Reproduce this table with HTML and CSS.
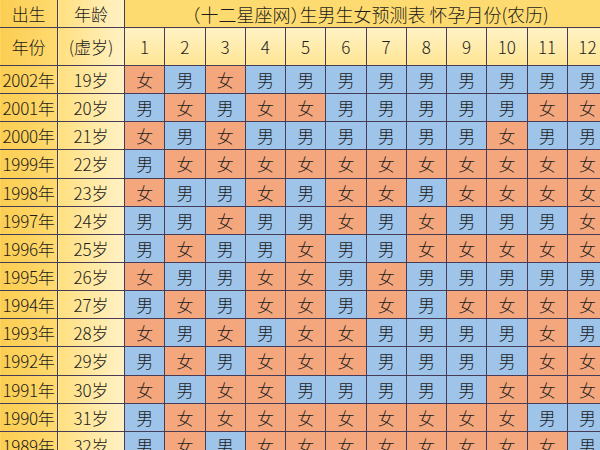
FILE: index.html
```html
<!DOCTYPE html>
<html lang="zh-CN">
<head>
<meta charset="utf-8">
<title>生男生女预测表</title>
<link rel="stylesheet" href="styles.css">
</head>
<body>
<div class="frame">
<table class="chart">
<colgroup>
<col class="c-yr"><col class="c-age">
<col class="c-m"><col class="c-m"><col class="c-m"><col class="c-m"><col class="c-m"><col class="c-m">
<col class="c-m"><col class="c-m"><col class="c-m"><col class="c-m"><col class="c-m"><col class="c-m">
</colgroup>
<thead>
<tr class="r-top">
<th class="yr">出生</th><th class="age">年龄</th>
<th class="title" colspan="12">（十二星座网）生男生女预测表&nbsp;怀孕月份(农历)</th>
</tr>
<tr class="r-sub">
<th class="yr">年份</th><th class="age">(虚岁)</th>
<th class="mon">1</th><th class="mon">2</th><th class="mon">3</th><th class="mon">4</th><th class="mon">5</th><th class="mon">6</th>
<th class="mon">7</th><th class="mon">8</th><th class="mon">9</th><th class="mon">10</th><th class="mon">11</th><th class="mon">12</th>
</tr>
</thead>
<tbody>
<tr><th class="yr">2002年</th><td class="age">19岁</td><td class="f">女</td><td class="m">男</td><td class="f">女</td><td class="m">男</td><td class="m">男</td><td class="m">男</td><td class="m">男</td><td class="m">男</td><td class="m">男</td><td class="m">男</td><td class="m">男</td><td class="m">男</td></tr>
<tr><th class="yr">2001年</th><td class="age">20岁</td><td class="m">男</td><td class="f">女</td><td class="m">男</td><td class="f">女</td><td class="f">女</td><td class="m">男</td><td class="m">男</td><td class="m">男</td><td class="m">男</td><td class="m">男</td><td class="f">女</td><td class="f">女</td></tr>
<tr><th class="yr">2000年</th><td class="age">21岁</td><td class="f">女</td><td class="m">男</td><td class="f">女</td><td class="m">男</td><td class="m">男</td><td class="m">男</td><td class="m">男</td><td class="m">男</td><td class="m">男</td><td class="f">女</td><td class="m">男</td><td class="m">男</td></tr>
<tr><th class="yr">1999年</th><td class="age">22岁</td><td class="m">男</td><td class="f">女</td><td class="f">女</td><td class="f">女</td><td class="f">女</td><td class="f">女</td><td class="f">女</td><td class="f">女</td><td class="f">女</td><td class="f">女</td><td class="f">女</td><td class="f">女</td></tr>
<tr><th class="yr">1998年</th><td class="age">23岁</td><td class="f">女</td><td class="m">男</td><td class="m">男</td><td class="f">女</td><td class="m">男</td><td class="f">女</td><td class="f">女</td><td class="m">男</td><td class="f">女</td><td class="f">女</td><td class="f">女</td><td class="f">女</td></tr>
<tr><th class="yr">1997年</th><td class="age">24岁</td><td class="m">男</td><td class="m">男</td><td class="f">女</td><td class="m">男</td><td class="m">男</td><td class="f">女</td><td class="m">男</td><td class="f">女</td><td class="m">男</td><td class="m">男</td><td class="m">男</td><td class="f">女</td></tr>
<tr><th class="yr">1996年</th><td class="age">25岁</td><td class="m">男</td><td class="f">女</td><td class="m">男</td><td class="m">男</td><td class="f">女</td><td class="m">男</td><td class="m">男</td><td class="f">女</td><td class="f">女</td><td class="f">女</td><td class="f">女</td><td class="f">女</td></tr>
<tr><th class="yr">1995年</th><td class="age">26岁</td><td class="f">女</td><td class="m">男</td><td class="m">男</td><td class="f">女</td><td class="f">女</td><td class="m">男</td><td class="f">女</td><td class="m">男</td><td class="m">男</td><td class="m">男</td><td class="m">男</td><td class="m">男</td></tr>
<tr><th class="yr">1994年</th><td class="age">27岁</td><td class="m">男</td><td class="f">女</td><td class="m">男</td><td class="f">女</td><td class="f">女</td><td class="m">男</td><td class="f">女</td><td class="m">男</td><td class="f">女</td><td class="f">女</td><td class="f">女</td><td class="f">女</td></tr>
<tr><th class="yr">1993年</th><td class="age">28岁</td><td class="f">女</td><td class="m">男</td><td class="f">女</td><td class="m">男</td><td class="f">女</td><td class="f">女</td><td class="m">男</td><td class="m">男</td><td class="m">男</td><td class="m">男</td><td class="f">女</td><td class="m">男</td></tr>
<tr><th class="yr">1992年</th><td class="age">29岁</td><td class="m">男</td><td class="f">女</td><td class="m">男</td><td class="f">女</td><td class="f">女</td><td class="f">女</td><td class="m">男</td><td class="m">男</td><td class="m">男</td><td class="m">男</td><td class="f">女</td><td class="f">女</td></tr>
<tr><th class="yr">1991年</th><td class="age">30岁</td><td class="f">女</td><td class="m">男</td><td class="f">女</td><td class="f">女</td><td class="m">男</td><td class="m">男</td><td class="m">男</td><td class="m">男</td><td class="m">男</td><td class="f">女</td><td class="f">女</td><td class="f">女</td></tr>
<tr><th class="yr">1990年</th><td class="age">31岁</td><td class="m">男</td><td class="f">女</td><td class="f">女</td><td class="f">女</td><td class="f">女</td><td class="f">女</td><td class="f">女</td><td class="f">女</td><td class="f">女</td><td class="f">女</td><td class="m">男</td><td class="m">男</td></tr>
<tr><th class="yr">1989年</th><td class="age">32岁</td><td class="m">男</td><td class="f">女</td><td class="m">男</td><td class="f">女</td><td class="f">女</td><td class="f">女</td><td class="f">女</td><td class="f">女</td><td class="f">女</td><td class="f">女</td><td class="f">女</td><td class="m">男</td></tr>
</tbody>
</table>
</div>
</body>
</html>
```
FILE: styles.css
```css
html, body {
  margin: 0;
  padding: 0;
  background: #ffffff;
}
.frame {
  width: 600px;
  height: 450px;
  overflow: hidden;
}
.chart {
  margin: -1px 0 0 -1px;
  border-collapse: collapse;
  table-layout: fixed;
  width: 608px;
  font-family: "Noto Sans CJK SC", "Noto Sans", sans-serif;
  font-size: 17px;
  color: #1c1c1c;
}
.c-yr { width: 58px; }
.c-age { width: 67px; }
.c-m { width: 40.25px; }
.chart th, .chart td {
  border: 1px solid #463c58;
  padding: 0;
  text-align: center;
  vertical-align: middle;
  font-weight: 300;
  white-space: nowrap;
  line-height: 1;
  overflow: hidden;
}
.r-top { height: 28px; }
.r-sub { height: 38px; }
tbody tr { height: 28.15px; }
.yr {
  background: linear-gradient(90deg, #fbcd52 0%, #ffda70 100%);
  letter-spacing: -0.3px;
}
.age {
  background: linear-gradient(90deg, #ffe080 0%, #fff1c4 100%);
}
.chart .title {
  background: #fedb70;
  font-size: 18px;
  font-feature-settings: "halt" 1;
  text-align: center;
  padding-left: 8px;
}
.mon {
  background: linear-gradient(180deg, #fff2c4 0%, #ffe593 100%);
}
.f { background: #f4a67c; }
.m { background: #9ec4ea; }
```
